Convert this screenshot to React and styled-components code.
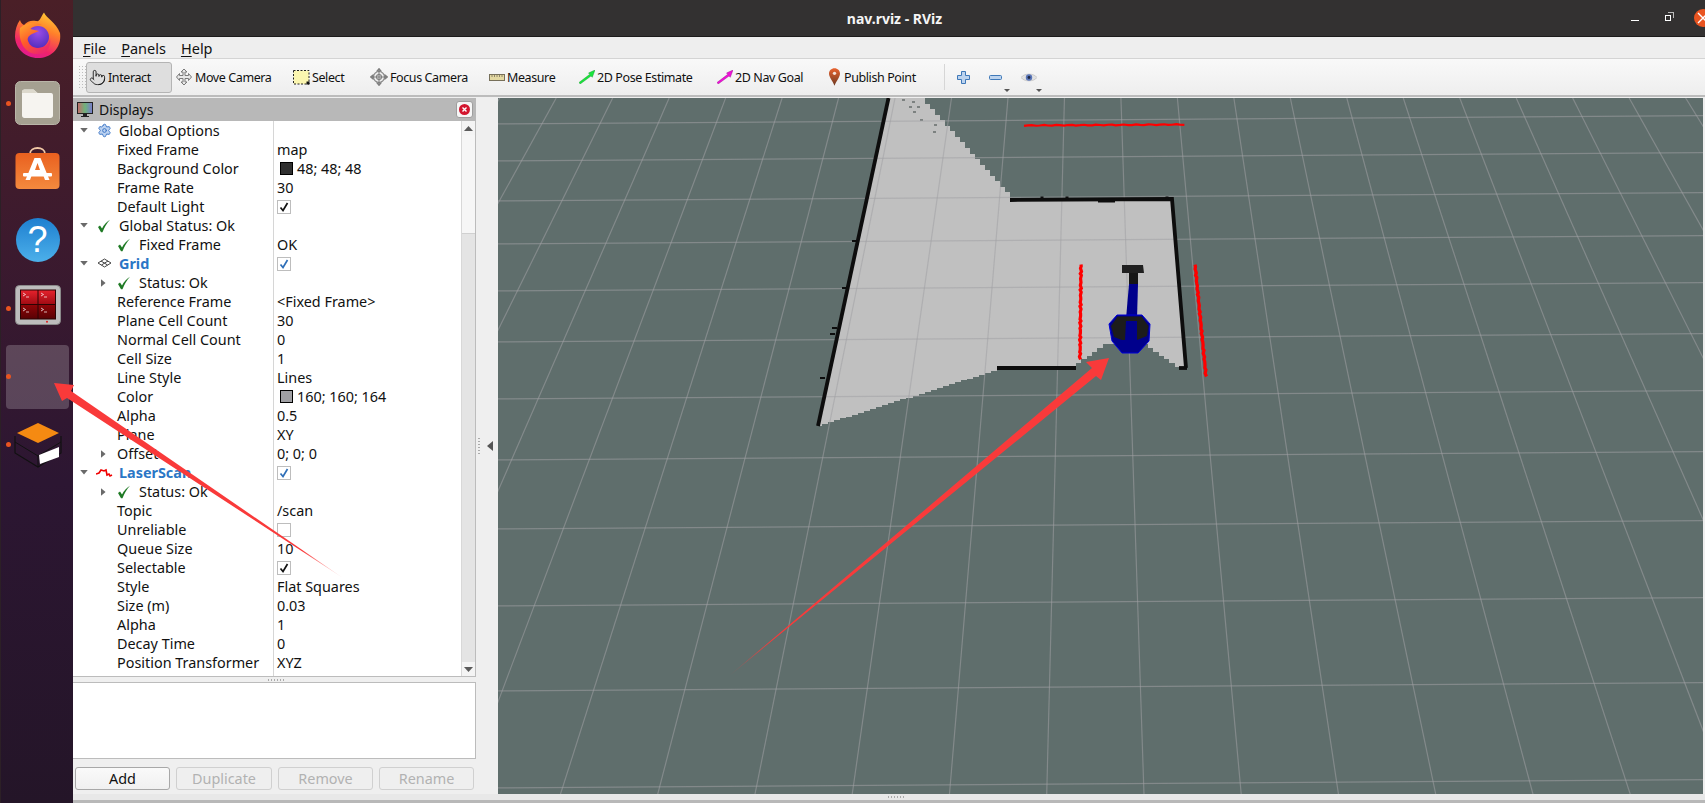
import React from "react";
import styled, { createGlobalStyle } from "styled-components";
import { Pointer, Settings } from "lucide-react";

const UI_FONT = `"Noto Sans", "Open Sans", sans-serif`;

const GlobalStyle = createGlobalStyle`
  html, body {
    margin: 0;
    padding: 0;
    background: #2c1632;
  }
  * {
    box-sizing: border-box;
  }
`;

//Tree data
const ROWS = [
  { kind: "root", label: "Global Options", icon: "gear" },
  { label: "Fixed Frame", value: "map" },
  { label: "Background Color", value: "48; 48; 48", swatch: "#303030" },
  { label: "Frame Rate", value: "30" },
  { label: "Default Light", check: "black" },
  { kind: "root", label: "Global Status: Ok", icon: "ok" },
  { kind: "status", label: "Fixed Frame", value: "OK" },
  { kind: "root", label: "Grid", icon: "grid", bold: true, check: "blue" },
  { kind: "status", label: "Status: Ok", caret: true },
  { label: "Reference Frame", value: "<Fixed Frame>" },
  { label: "Plane Cell Count", value: "30" },
  { label: "Normal Cell Count", value: "0" },
  { label: "Cell Size", value: "1" },
  { label: "Line Style", value: "Lines" },
  { label: "Color", value: "160; 160; 164", swatch: "#a0a0a4" },
  { label: "Alpha", value: "0.5" },
  { label: "Plane", value: "XY" },
  { label: "Offset", value: "0; 0; 0", caret: true },
  { kind: "root", label: "LaserScan", icon: "laser", bold: true, check: "blue" },
  { kind: "status", label: "Status: Ok", caret: true },
  { label: "Topic", value: "/scan" },
  { label: "Unreliable", check: "none" },
  { label: "Queue Size", value: "10" },
  { label: "Selectable", check: "black" },
  { label: "Style", value: "Flat Squares" },
  { label: "Size (m)", value: "0.03" },
  { label: "Alpha", value: "1" },
  { label: "Decay Time", value: "0" },
  { label: "Position Transformer", value: "XYZ" },
  { label: "Color Transformer", value: "Intensity" },
];

//Scene helpers, everything is in page coordinates
const VIEW = { x: 498, y: 97, w: 1205, h: 697 };
const VANISH = { x: 1089, y: -867 };
const H_LINES = [121, 158, 198, 241, 288, 339, 396, 457, 526, 603, 688, 785];

const gridVerticals = () => {
  const lines = [];
  for (let k = -12; k <= 12; k++) {
    const bottomX = 1144 + k * 97.3;
    const topX = VANISH.x + (bottomX - VANISH.x) * ((VIEW.y + 867) / (794 + 867));
    lines.push({ x1: topX, y1: VIEW.y, x2: bottomX, y2: 794 });
  }
  return lines;
};

const gridHorizontals = () =>
  H_LINES.map((y) => ({
    x1: VIEW.x,
    y1: y + (780 - VIEW.x) * 0.0068,
    x2: VIEW.x + VIEW.w,
    y2: y - (VIEW.x + VIEW.w - 780) * 0.0068,
  }));

const stairs = (x0, y0, x1, y1, step) => {
  const count = Math.max(1, Math.round(Math.abs(x1 - x0) / step));
  const pts = [];
  for (let i = 0; i < count; i++) {
    const ax = x0 + ((x1 - x0) * i) / count;
    const ay = y0 + ((y1 - y0) * i) / count;
    const bx = x0 + ((x1 - x0) * (i + 1)) / count;
    pts.push(`${ax},${ay}`, `${bx},${ay}`);
  }
  pts.push(`${x1},${y1}`);
  return pts.join(" ");
};

const jitterLine = (x0, y0, x1, y1, amount) => {
  const pts = [];
  const n = 40;
  for (let i = 0; i <= n; i++) {
    const t = i / n;
    const j = Math.sin(i * 2.7) * amount;
    pts.push(`${x0 + (x1 - x0) * t + j},${y0 + (y1 - y0) * t + Math.cos(i * 1.9) * amount}`);
  }
  return pts.join(" ");
};

const MAP_POINTS = [
  "889,97 920,97",
  stairs(920, 97, 1010, 197, 5),
  "1172,197 1185,367 1180,367",
  stairs(1180, 366, 1148, 343, 5),
  "1108,343",
  stairs(1108, 343, 1076, 366, 5),
  "997,368",
  stairs(997, 370, 822, 425, 6),
  "818,425",
].join(" ");

const SPECKLES = [
  [902, 98], [912, 100], [909, 105], [917, 105], [913, 110], [920, 118], [934, 123], [933, 130],
];
const LEFT_TICKS = [[855, 240], [845, 287], [835, 327], [833, 333], [823, 377]];
const TOP_TICKS = [1042, 1067, 1167];

const Scene = () => (
  <SceneSvg viewBox={`${VIEW.x} ${VIEW.y} ${VIEW.w} ${VIEW.h}`}>
    <polygon points={MAP_POINTS} fill="#c0c0c0" shapeRendering="crispEdges" />
    {SPECKLES.map(([x, y]) => (
      <rect key={`${x}-${y}`} x={x} y={y} width="3" height="2" fill="#7c8180" />
    ))}
    {gridVerticals().concat(gridHorizontals()).map((l, i) => (
      <line key={i} {...l} stroke="#a0a0a4" strokeOpacity="0.55" strokeWidth="1.2" />
    ))}
    <g stroke="#0d0d0d" strokeWidth="3.8" fill="none">
      <line x1="888.5" y1="97" x2="818" y2="425" />
      <polyline points="1010,199 1172,198 1186,367" />
      <line x1="1179" y1="367" x2="1187" y2="367" />
      <line x1="997" y1="367" x2="1076" y2="367" />
      <line x1="1098" y1="199.5" x2="1115" y2="199.5" strokeWidth="4" />
      {LEFT_TICKS.map(([x, y]) => (
        <line key={y} x1={x - 3} y1={y} x2={x + 2} y2={y} strokeWidth="2" />
      ))}
      {TOP_TICKS.map((x) => (
        <line key={x} x1={x} y1="195.5" x2={x} y2="198" strokeWidth="3" />
      ))}
    </g>
    <g stroke="#ff0000" fill="none">
      <polyline points={jitterLine(1024, 124.5, 1184, 123.5, 0.4)} strokeWidth="2.2" />
      <polyline points={jitterLine(1081, 263, 1080, 358, 0.6)} strokeWidth="3.2" />
      <polyline points={jitterLine(1195, 263, 1206, 375, 0.6)} strokeWidth="3.2" />
    </g>
    <g>
      <polygon points="1129,272 1138,272 1138,283 1129,283" fill="#161616" />
      <polygon points="1122,264 1143,264 1144,272 1122,272" fill="#202020" />
      <polygon points="1129,283 1138,283 1137,318 1126,318" fill="#00008c" />
      <polygon points="1117,314 1142,314 1150,323 1149,340 1138,352 1122,352 1112,340 1109,323" fill="#00008c" stroke="#0000d8" strokeWidth="1" />
      <polygon points="1117.5,315.5 1141.5,315.5 1148.5,325 1147,335 1137,339 1122,339 1114,336 1111,325" fill="#1c1c1c" />
      <polygon points="1126,320 1137,320 1137,339 1125,339" fill="#00008c" />
    </g>
  </SceneSvg>
);

//Small drawings
const Caret = ({ open }) =>
  open ? <CaretShape viewBox="0 0 9 6"><path d="M0 0h9L4.500 5.500z" /></CaretShape> : <CaretShape viewBox="0 0 6 9"><path d="M0 0l5.500 4.500L0 9z" /></CaretShape>;

const OkIcon = () => (
  <svg width="14" height="14" viewBox="0 0 14 14">
    <path d="M1 8l2-1.500 2 3C7 5.500 9.500 3 13 .800 10 4 7.500 8 5.500 13.200H4z" fill="#1f7a25" />
  </svg>
);

const GridIcon = () => (
  <svg width="15" height="12" viewBox="0 0 15 12" fill="none" stroke="#444" strokeWidth="1">
    <path d="M7.500 1L14 5l-6.500 4L1 5zM4 3l6.500 4M11 3L4.500 7" />
  </svg>
);

const LaserIcon = () => (
  <svg width="17" height="10" viewBox="0 0 17 10" fill="none" stroke="#f00000" strokeWidth="1.600">
    <path d="M0 6l3-1 2-3 3 1 2-1 1 5 2-1 1 2 2-1" />
  </svg>
);

const ROW_ICONS = {
  gear: <Settings size={15} color="#3f78c8" fill="#bcd2f0" strokeWidth={1.6} />,
  ok: <OkIcon />,
  grid: <GridIcon />,
  laser: <LaserIcon />,
};

const MoveIcon = () => (
  <svg width="18" height="18" viewBox="0 0 18 18" fill="#e8e8e8" stroke="#7a7a7a" strokeWidth="1">
    <path d="M9 1l3 3h-2v3.500h3.500v-2l3 3.500-3 3.500v-2H10V14h2l-3 3-3-3h2v-3.500H4.500v2l-3-3.500 3-3.500v2H8V4H6z" />
  </svg>
);

const SelectIcon = () => (
  <svg width="17" height="15" viewBox="0 0 17 15">
    <rect x="0.500" y="0.500" width="15.500" height="13.500" fill="#fbf6b0" stroke="#222" strokeDasharray="2 1.500" />
    <rect x="13.500" y="11.500" width="3" height="3" fill="#111" />
  </svg>
);

const FocusIcon = () => (
  <svg width="18" height="18" viewBox="0 0 18 18" fill="none" stroke="#7e7e7e" strokeWidth="1.100">
    <circle cx="9" cy="9" r="5.500" fill="#ececec" />
    <circle cx="9" cy="9" r="2.500" />
    <path d="M9 .500v17M.500 9h17M9 .500l-2 2.500h4zM9 17.500l-2-2.500h4zM.500 9l2.500-2v4zM17.500 9L15 7v4z" />
  </svg>
);

const RulerIcon = () => (
  <svg width="16" height="7" viewBox="0 0 16 7">
    <rect x="0.500" y="0.500" width="15" height="6" fill="#e4d9a2" stroke="#77705a" />
    <path d="M3 1v2M5.500 1v2M8 1v2M10.500 1v2M13 1v2" stroke="#77705a" strokeWidth="0.800" />
  </svg>
);

const GoalArrow = ({ color, edge }) => (
  <svg width="16" height="14" viewBox="0 0 16 14">
    <path d="M16 0L9.500 3l1.300 1.300L0 12.500 1.200 14 12 6l1.300 1.300z" fill={color} stroke={edge} strokeWidth="0.400" />
  </svg>
);

const PinIcon = () => (
  <svg width="11" height="18" viewBox="0 0 12 19">
    <defs>
      <linearGradient id="pin" x1="0" y1="0" x2="0" y2="1">
        <stop offset="0" stopColor="#e8632f" />
        <stop offset="1" stopColor="#6d3a22" />
      </linearGradient>
    </defs>
    <path d="M6 0c3.400 0 6 2.500 6 5.800C12 10 8 14 6 19 4 14 0 10 0 5.800 0 2.500 2.600 0 6 0z" fill="url(#pin)" />
    <circle cx="6" cy="5.500" r="1.800" fill="#f4e4dc" />
  </svg>
);

const PlusIcon = () => (
  <svg width="13" height="13" viewBox="0 0 13 13">
    <path d="M4.500.500h4v4h4v4h-4v4h-4v-4h-4v-4h4z" fill="#bcd3ee" stroke="#3f78b8" />
  </svg>
);

const MinusIcon = () => (
  <svg width="13" height="5" viewBox="0 0 13 5">
    <rect x="0.500" y="0.500" width="12" height="4" rx="1" fill="#bcd3ee" stroke="#3f78b8" />
  </svg>
);

const EyeIcon = () => (
  <svg width="16" height="11" viewBox="0 0 16 11">
    <path d="M0 5.500C3 1 13 1 16 5.500 13 10 3 10 0 5.500z" fill="#e2e2e2" stroke="#b5b5b5" strokeWidth="0.600" />
    <circle cx="8" cy="5.500" r="3.200" fill="#5a76b8" />
    <circle cx="8" cy="5.500" r="1.400" fill="#1c2540" />
  </svg>
);

const MonitorIcon = () => (
  <svg width="16" height="16" viewBox="0 0 16 16">
    <defs>
      <linearGradient id="screen" x1="0" y1="0" x2="1" y2="0">
        <stop offset="0" stopColor="#c46a6a" />
        <stop offset="0.500" stopColor="#6fb27a" />
        <stop offset="1" stopColor="#7a7ad0" />
      </linearGradient>
    </defs>
    <rect x="0.500" y="0.500" width="15" height="11" fill="url(#screen)" stroke="#222" />
    <path d="M6.500 12h3v2h-3zM4 14.500h8" stroke="#222" fill="#222" />
  </svg>
);

const FirefoxIcon = () => (
  <svg width="46" height="46" viewBox="0 0 46 46">
    <defs>
      <linearGradient id="ffBody" x1="0.700" y1="0" x2="0.300" y2="1">
        <stop offset="0" stopColor="#ffc935" />
        <stop offset="0.350" stopColor="#ff7f2a" />
        <stop offset="0.750" stopColor="#f0246a" />
        <stop offset="1" stopColor="#e01a94" />
      </linearGradient>
      <linearGradient id="ffTail" x1="0" y1="0" x2="0.600" y2="1">
        <stop offset="0" stopColor="#ffb02e" />
        <stop offset="0.550" stopColor="#ff5a2a" />
        <stop offset="1" stopColor="#ee2a6a" />
      </linearGradient>
      <radialGradient id="ffGlobe" cx="0.500" cy="0.300" r="0.800">
        <stop offset="0" stopColor="#9a4ce8" />
        <stop offset="1" stopColor="#4b2bb8" />
      </radialGradient>
    </defs>
    <path d="M29 .500C31 6 41 10 45 21 47 36 36 46 23 46 10 46 0 36 0 24 0 18 2 12 5 8c1 3 2 4 4 5 3-4 8-5 12-4 4 1 4-3 8-8.500z" fill="url(#ffBody)" />
    <circle cx="23" cy="25" r="11" fill="url(#ffGlobe)" />
    <path d="M5 16C11 11 19 9 27 13 21 13 17 14 15 17L24 19 17 22C13 24 12 27 13 29 15 35 18 36 23 36 30 36 34 32 35 26 37 36 30 43 21 42 10 41 3 30 5 16z" fill="url(#ffTail)" />
  </svg>
);

const FilesIcon = () => (
  <svg width="45" height="44" viewBox="0 0 45 44">
    <rect x="0.500" y="0.500" width="44" height="43" rx="5" fill="#a5a091" stroke="#b9b5a8" />
    <path d="M7 11c0-1.500 1-2.500 2.500-2.500h9l4 3.500H36c1.500 0 2 1 2 2.500v20c0 1.500-1 2.500-2.500 2.500h-26C8 37 7 36 7 34.500z" fill="#f6f4f0" />
    <path d="M7 11c0-1.500 1-2.500 2.500-2.500h9l4 3.500H7z" fill="#dcd8cc" />
  </svg>
);

const SoftwareIcon = () => (
  <svg width="45" height="44" viewBox="0 0 45 44">
    <defs>
      <linearGradient id="bag" x1="0" y1="0" x2="0" y2="1">
        <stop offset="0" stopColor="#e9601f" />
        <stop offset="1" stopColor="#f48a3e" />
      </linearGradient>
    </defs>
    <path d="M15 7C15-1 30-1 30 7" fill="none" stroke="#f2c9a6" strokeWidth="1.800" />
    <rect x="0.500" y="6" width="44" height="36" rx="4" fill="url(#bag)" />
    <path d="M19.500 11h6l9 22h-4.500l-2-5.500h-11L15 33h-4.500zM20 23h5l-2.500-7z" fill="#fff" />
    <rect x="8" y="26" width="29" height="3.500" rx="1" fill="#fff" />
  </svg>
);

const TerminalIcon = () => (
  <svg width="46" height="40" viewBox="0 0 46 40">
    <defs>
      <linearGradient id="termTop" x1="0" y1="0" x2="0" y2="1">
        <stop offset="0" stopColor="#e4222c" />
        <stop offset="1" stopColor="#a20c14" />
      </linearGradient>
      <linearGradient id="termBottom" x1="0" y1="0" x2="0" y2="1">
        <stop offset="0" stopColor="#8e0508" />
        <stop offset="1" stopColor="#5a0204" />
      </linearGradient>
    </defs>
    <rect x="0.500" y="0.500" width="45" height="39" rx="4" fill="#bdbdbd" stroke="#8a8a8a" />
    <rect x="5" y="4.500" width="36" height="30" fill="#2a0404" />
    <rect x="6" y="5.500" width="16.500" height="13.500" fill="url(#termTop)" />
    <rect x="23.500" y="5.500" width="16.500" height="13.500" fill="url(#termTop)" />
    <rect x="6" y="20" width="16.500" height="13.500" fill="url(#termBottom)" />
    <rect x="23.500" y="20" width="16.500" height="13.500" fill="url(#termBottom)" />
    <path d="M8 8l2.500 1.500L8 11M11 12h3M26 8l2.500 1.500L26 11M29 12h3M8 23l2.500 1.500L8 26M11 27h3M26 23l2.500 1.500L26 26M29 27h3" stroke="#fff" strokeWidth="0.700" fill="none" />
    <circle cx="32" cy="36.800" r="1" fill="#e02020" />
  </svg>
);

const BoxIcon = () => (
  <svg width="48" height="46" viewBox="0 0 48 46">
    <path d="M1 14v17l23 14 23-14V14" fill="none" stroke="#111" strokeWidth="1.200" />
    <path d="M1 20l23 14 23-14M24 34v11" fill="none" stroke="#111" strokeWidth="1" />
    <path d="M3 11L24 1l21 10-21 10z" fill="#f58a12" />
    <path d="M25 33l20-8v10L26 42z" fill="#fff" />
  </svg>
);

//Page
const App = () => {
  return (
    <Desktop>
      <GlobalStyle />
      <Dock>
        <DockSlot><FirefoxIcon /></DockSlot>
        <DockSlot $running><FilesIcon /></DockSlot>
        <DockSlot $lift={3}><SoftwareIcon /></DockSlot>
        <DockSlot><HelpBubble>?</HelpBubble></DockSlot>
        <DockSlot $running $lift={3}><TerminalIcon /></DockSlot>
        <DockSlot $running $active />
        <DockSlot $running><BoxIcon /></DockSlot>
      </Dock>

      <Window>
        <TitleBar>
          <span />
          <Title>nav.rviz - RViz</Title>
          <WindowControls>
            <MinimizeMark />
            <RestoreMark />
            <CloseCircle>
              <svg width="12" height="12" viewBox="0 0 12 12" stroke="#fff" strokeWidth="1.400">
                <path d="M1 1l10 10M11 1L1 11" />
              </svg>
            </CloseCircle>
          </WindowControls>
        </TitleBar>

        <MenuBar>
          <MenuItem><u>F</u>ile</MenuItem>
          <MenuItem><u>P</u>anels</MenuItem>
          <MenuItem><u>H</u>elp</MenuItem>
        </MenuBar>

        <Toolbar>
          <Grip />
          <Tool $width={86} $active><Pointer size={17} strokeWidth={1.2} color="#111" />Interact</Tool>
          <Tool $width={118}><MoveIcon />Move Camera</Tool>
          <Tool $width={77}><SelectIcon />Select</Tool>
          <Tool $width={119}><FocusIcon />Focus Camera</Tool>
          <Tool $width={90}><RulerIcon />Measure</Tool>
          <Tool $width={138}><GoalArrow color="#19e63c" edge="#0c8a20" />2D Pose Estimate</Tool>
          <Tool $width={112}><GoalArrow color="#f010d8" edge="#8a0a80" />2D Nav Goal</Tool>
          <Tool $width={115} $gap={4}><PinIcon />Publish Point</Tool>
          <ToolSeparator />
          <IconTool $width={32}><PlusIcon /></IconTool>
          <IconTool $width={32} $menu><MinusIcon /></IconTool>
          <IconTool $width={36} $menu><EyeIcon /></IconTool>
        </Toolbar>

        <Main>
          <SidePanel>
            <PanelHeader>
              <MonitorIcon />
              <PanelTitle>Displays</PanelTitle>
              <PanelClose>
                <svg width="11" height="11" viewBox="0 0 11 11">
                  <circle cx="5.500" cy="5.500" r="5.500" fill="#d3162f" />
                  <path d="M3.500 3.500l4 4M7.500 3.500l-4 4" stroke="#fff" strokeWidth="1.400" />
                </svg>
              </PanelClose>
            </PanelHeader>

            <TreeFrame>
              <TreeRows>
                {ROWS.map((row, i) => (
                  <TreeRow key={i} row={row} />
                ))}
              </TreeRows>
              <ScrollBar>
                <ScrollButton><ScrollArrow viewBox="0 0 9 5"><path d="M0 5L4.500 0 9 5z" /></ScrollArrow></ScrollButton>
                <ScrollThumb />
                <ScrollTrack />
                <ScrollButton><ScrollArrow viewBox="0 0 9 5"><path d="M0 0l4.500 5L9 0z" /></ScrollArrow></ScrollButton>
              </ScrollBar>
            </TreeFrame>

            <HSplitter>
              <Dots $count={6} />
            </HSplitter>
            <DescriptionBox />
            <ButtonRow>
              <PanelButton>Add</PanelButton>
              <PanelButton disabled>Duplicate</PanelButton>
              <PanelButton disabled>Remove</PanelButton>
              <PanelButton disabled>Rename</PanelButton>
            </ButtonRow>
          </SidePanel>

          <VSplitter>
            <VDots />
            <CollapseArrow viewBox="0 0 6 10"><path d="M6 0v10L0 5z" /></CollapseArrow>
          </VSplitter>

          <Viewport>
            <Scene />
          </Viewport>
        </Main>

        <StatusStrip>
          <Dots $count={6} />
        </StatusStrip>
      </Window>

      <Annotations viewBox="0 0 1705 803">
        <defs>
          <linearGradient id="tailA" gradientUnits="userSpaceOnUse" x1="1090" y1="370" x2="729" y2="676">
            <stop offset="0.880" stopColor="#f93a3a" />
            <stop offset="1" stopColor="#f93a3a" stopOpacity="0.150" />
          </linearGradient>
          <linearGradient id="tailB" gradientUnits="userSpaceOnUse" x1="70" y1="394" x2="343" y2="578">
            <stop offset="0.850" stopColor="#f93a3a" />
            <stop offset="1" stopColor="#f93a3a" stopOpacity="0.100" />
          </linearGradient>
        </defs>
        <polygon points="1109,358 1086,362 1092,368 729,676 1096,376 1101,380" fill="url(#tailA)" />
        <polygon points="54,383 74,385 71,391 343,578 67,398 62,401" fill="url(#tailB)" />
      </Annotations>
    </Desktop>
  );
};

const TreeRow = ({ row }) => {
  const { kind, label, value, swatch, check, caret, icon, bold } = row;
  return (
    <Row>
      <NameCell>
        {kind === "root" && (
          <>
            <Slot $width={21}><Caret open /></Slot>
            <Slot $width={20}>{ROW_ICONS[icon]}</Slot>
            <Label $left={5} $bold={bold}>{label}</Label>
          </>
        )}
        {kind === "status" && (
          <>
            <Slot $width={19} />
            <Slot $width={22}>{caret && <Caret />}</Slot>
            <Slot $width={20}><OkIcon /></Slot>
            <Label $left={5}>{label}</Label>
          </>
        )}
        {!kind && (
          <>
            <Slot $width={19} />
            <Slot $width={22}>{caret && <Caret />}</Slot>
            <Label $left={3}>{label}</Label>
          </>
        )}
      </NameCell>
      <ValueCell>
        {swatch && <Swatch $color={swatch} />}
        {value}
        {check && (
          <CheckBox>
            {check !== "none" && (
              <svg width="10" height="10" viewBox="0 0 10 10" fill="none" stroke={check === "blue" ? "#2f6fb8" : "#111"} strokeWidth="1.700">
                <path d="M1.500 5.500L4 8.500 8.500 1" />
              </svg>
            )}
          </CheckBox>
        )}
      </ValueCell>
    </Row>
  );
};

//Styled Components
const Desktop = styled.div`
  position: relative;
  display: flex;
  width: 1705px;
  height: 803px;
  overflow: hidden;
  font-family: ${UI_FONT};
  font-size: 14.4px;
  color: #111;
`;

const Dock = styled.nav`
  flex: 0 0 73px;
  display: flex;
  flex-direction: column;
  gap: 4.33px;
  padding: 3px 4px 0 5px;
  background: linear-gradient(180deg, #4a1f27 0%, #3c1a2e 30%, #2c1632 60%, #241528 100%);
  border-left: 1px solid #2c2026;
`;

const DockSlot = styled.div`
  position: relative;
  flex: 0 0 64px;
  display: flex;
  align-items: center;
  justify-content: center;
  padding-bottom: ${(p) => (p.$lift || 0) * 2}px;
  border-radius: 4px;
  background: ${(p) => (p.$active ? "rgba(255, 255, 255, 0.2)" : "transparent")};
  &::before {
    content: "";
    display: ${(p) => (p.$running ? "block" : "none")};
    position: absolute;
    left: -0.500px;
    top: 29.500px;
    width: 5px;
    height: 5px;
    border-radius: 50%;
    background: #e95420;
  }
`;

const HelpBubble = styled.div`
  width: 44px;
  height: 44px;
  border-radius: 50%;
  background: linear-gradient(180deg, #1e7fd0 0%, #4cb0ea 100%);
  color: #fff;
  font-family: "Liberation Sans", sans-serif;
  font-size: 36px;
  line-height: 44px;
  text-align: center;
`;

const Window = styled.div`
  flex: 1;
  min-width: 0;
  display: flex;
  flex-direction: column;
  background: #efefef;
`;

const TitleBar = styled.header`
  flex: 0 0 37px;
  display: grid;
  grid-template-columns: 1fr auto 1fr;
  align-items: center;
  padding-left: 11px;
  background: #333131;
  border-bottom: 1px solid #1c1b1b;
`;

const Title = styled.div`
  color: #f5f5f5;
  font-size: 14px;
  font-weight: 700;
`;

const WindowControls = styled.div`
  display: flex;
  align-items: center;
  justify-content: flex-end;
  margin-right: -7px;
`;

const MinimizeMark = styled.div`
  width: 8px;
  height: 1.500px;
  margin-top: 5px;
  background: #fff;
`;

const RestoreMark = styled.div`
  position: relative;
  width: 6px;
  height: 6px;
  margin-left: 26px;
  border: 1.200px solid #fff;
  &::after {
    content: "";
    position: absolute;
    top: -4px;
    right: -4px;
    width: 5px;
    height: 5px;
    border-top: 1px solid #bbb;
    border-right: 1px solid #bbb;
  }
`;

const CloseCircle = styled.div`
  display: flex;
  align-items: center;
  justify-content: center;
  width: 18px;
  height: 18px;
  margin-left: 23px;
  border-radius: 50%;
  background: #e95420;
`;

const MenuBar = styled.div`
  flex: 0 0 22px;
  display: flex;
  align-items: center;
  padding-left: 10px;
  gap: 15px;
  background: #eeeeee;
  border-bottom: 1px solid #d4d4d4;
  font-size: 14.5px;
  u {
    text-underline-offset: 2px;
  }
`;

const MenuItem = styled.span`
  line-height: 20px;
`;

const Toolbar = styled.div`
  flex: 0 0 38px;
  display: flex;
  align-items: center;
  padding-left: 5px;
  background: linear-gradient(180deg, #f9f9f9 0%, #eeeeee 100%);
  border-bottom: 2px solid #bcbcbc;
`;

const Grip = styled.div`
  flex: 0 0 8px;
  height: 24px;
  background-image: radial-gradient(circle, #bdbdbd 0.700px, transparent 0.800px);
  background-size: 3px 3px;
`;

const Tool = styled.div`
  flex: 0 0 ${(p) => p.$width}px;
  height: 31px;
  display: flex;
  align-items: center;
  gap: ${(p) => p.$gap || 2}px;
  padding-left: 2px;
  white-space: nowrap;
  font-size: 12.5px;
  letter-spacing: -0.4px;
  border-radius: 3px;
  border: 1px solid ${(p) => (p.$active ? "#b4b4b4" : "transparent")};
  background: ${(p) => (p.$active ? "#dedede" : "transparent")};
`;

const ToolSeparator = styled.div`
  flex: 0 0 1px;
  height: 26px;
  margin: 0 6px 0 3px;
  background: #d6d6d6;
`;

const IconTool = styled.div`
  position: relative;
  flex: 0 0 ${(p) => p.$width}px;
  display: flex;
  align-items: center;
  justify-content: flex-start;
  padding-left: 6px;
  height: 31px;
  &::after {
    content: "";
    display: ${(p) => (p.$menu ? "block" : "none")};
    position: absolute;
    left: 21px;
    bottom: 1px;
    border-left: 3px solid transparent;
    border-right: 3px solid transparent;
    border-top: 3px solid #555;
  }
`;

const Main = styled.div`
  flex: 1;
  min-height: 0;
  display: flex;
  padding-top: 1px;
`;

const SidePanel = styled.section`
  flex: 0 0 403px;
  display: flex;
  flex-direction: column;
`;

const PanelHeader = styled.div`
  flex: 0 0 23px;
  display: flex;
  align-items: center;
  padding: 0 3px 0 4px;
  background: #b8b8b8;
`;

const PanelTitle = styled.div`
  flex: 1;
  margin-left: 6px;
  font-size: 14px;
`;

const PanelClose = styled.div`
  width: 17px;
  height: 17px;
  display: flex;
  align-items: center;
  justify-content: center;
  background: #f6f6f6;
  border: 1px solid #9e9e9e;
  border-radius: 3px;
`;

const TreeFrame = styled.div`
  flex: 0 0 556px;
  display: flex;
  background: #fff;
  border-bottom: 1px solid #bcbcbc;
  border-right: 1px solid #bcbcbc;
  overflow: hidden;
`;

const TreeRows = styled.div`
  flex: 1;
  min-width: 0;
`;

const Row = styled.div`
  height: 19px;
  display: grid;
  grid-template-columns: 201px 1fr;
  align-items: stretch;
  line-height: 19px;
`;

const NameCell = styled.div`
  display: flex;
  align-items: center;
  white-space: nowrap;
  border-right: 1px solid #d6d6d6;
`;

const ValueCell = styled.div`
  display: flex;
  align-items: center;
  padding-left: 3px;
  white-space: nowrap;
`;

const Slot = styled.div`
  flex: 0 0 ${(p) => p.$width}px;
  display: flex;
  align-items: center;
  justify-content: center;
`;

const Label = styled.span`
  margin-left: ${(p) => p.$left}px;
  font-weight: ${(p) => (p.$bold ? 700 : 400)};
  color: ${(p) => (p.$bold ? "#2a76c6" : "inherit")};
`;

const CaretShape = styled.svg`
  width: ${(p) => (p.viewBox === "0 0 9 6" ? 8 : 5)}px;
  height: ${(p) => (p.viewBox === "0 0 9 6" ? 5 : 8)}px;
  fill: #6a6a6a;
`;

const Swatch = styled.span`
  width: 13px;
  height: 13px;
  margin: 0 4px 0 3px;
  border: 1px solid #000;
  background: ${(p) => p.$color};
`;

const CheckBox = styled.span`
  width: 14px;
  height: 14px;
  display: flex;
  align-items: center;
  justify-content: center;
  background: #fff;
  border: 1px solid #bdbdbd;
`;

const ScrollBar = styled.div`
  flex: 0 0 14px;
  display: flex;
  flex-direction: column;
  border-left: 1px solid #d8d8d8;
  background: #e4e4e4;
`;

const ScrollButton = styled.div`
  flex: 0 0 14px;
  display: flex;
  align-items: center;
  justify-content: center;
  background: #f4f4f4;
`;

const ScrollArrow = styled.svg`
  width: 9px;
  height: 5px;
  fill: #5a5a5a;
`;

const ScrollThumb = styled.div`
  flex: 0 0 99px;
  background: #f6f6f6;
  border-bottom: 1px solid #d0d0d0;
`;

const ScrollTrack = styled.div`
  flex: 1;
`;

const HSplitter = styled.div`
  flex: 0 0 5px;
  display: flex;
  align-items: center;
  justify-content: center;
  padding-left: 3px;
`;

const Dots = styled.div`
  width: ${(p) => p.$count * 3}px;
  height: 2px;
  background-image: radial-gradient(circle, #aaa 0.700px, transparent 0.800px);
  background-size: 3px 2px;
`;

const DescriptionBox = styled.div`
  flex: 0 0 77px;
  background: #fff;
  border: 1px solid #bcbcbc;
  border-left: none;
`;

const ButtonRow = styled.div`
  flex: 0 0 23px;
  display: grid;
  grid-template-columns: 95px 96px 95px 95px;
  gap: 6px;
  margin: 8px 0 0 2px;
`;

const PanelButton = styled.button`
  font-family: ${UI_FONT};
  font-size: 14.4px;
  padding: 0;
  color: ${(p) => (p.disabled ? "#b2b2b2" : "#111")};
  border: 1px solid ${(p) => (p.disabled ? "#d0d0d0" : "#a8a8a8")};
  border-radius: 3px;
  background: ${(p) => (p.disabled ? "#efefef" : "linear-gradient(180deg, #fafafa, #f0f0f0)")};
`;

const VSplitter = styled.div`
  flex: 0 0 22px;
  display: flex;
  align-items: center;
  gap: 7px;
  padding-left: 2px;
`;

const VDots = styled.div`
  width: 2px;
  height: 18px;
  background-image: radial-gradient(circle, #aaa 0.700px, transparent 0.800px);
  background-size: 2px 3px;
`;

const CollapseArrow = styled.svg`
  width: 6px;
  height: 10px;
  fill: #555;
`;

const Viewport = styled.div`
  flex: 0 0 1205px;
  height: 697px;
  background: #5f6e6c;
`;

const SceneSvg = styled.svg`
  display: block;
  width: 100%;
  height: 100%;
`;

const StatusStrip = styled.div`
  flex: 0 0 9px;
  display: flex;
  justify-content: center;
  padding: 2px 0 0 14px;
  background: linear-gradient(180deg, #e8e8e8 0, #e8e8e8 6px, #b8b8b8 6px);
`;

const Annotations = styled.svg`
  position: absolute;
  inset: 0;
  width: 1705px;
  height: 803px;
  pointer-events: none;
`;

export default App;
